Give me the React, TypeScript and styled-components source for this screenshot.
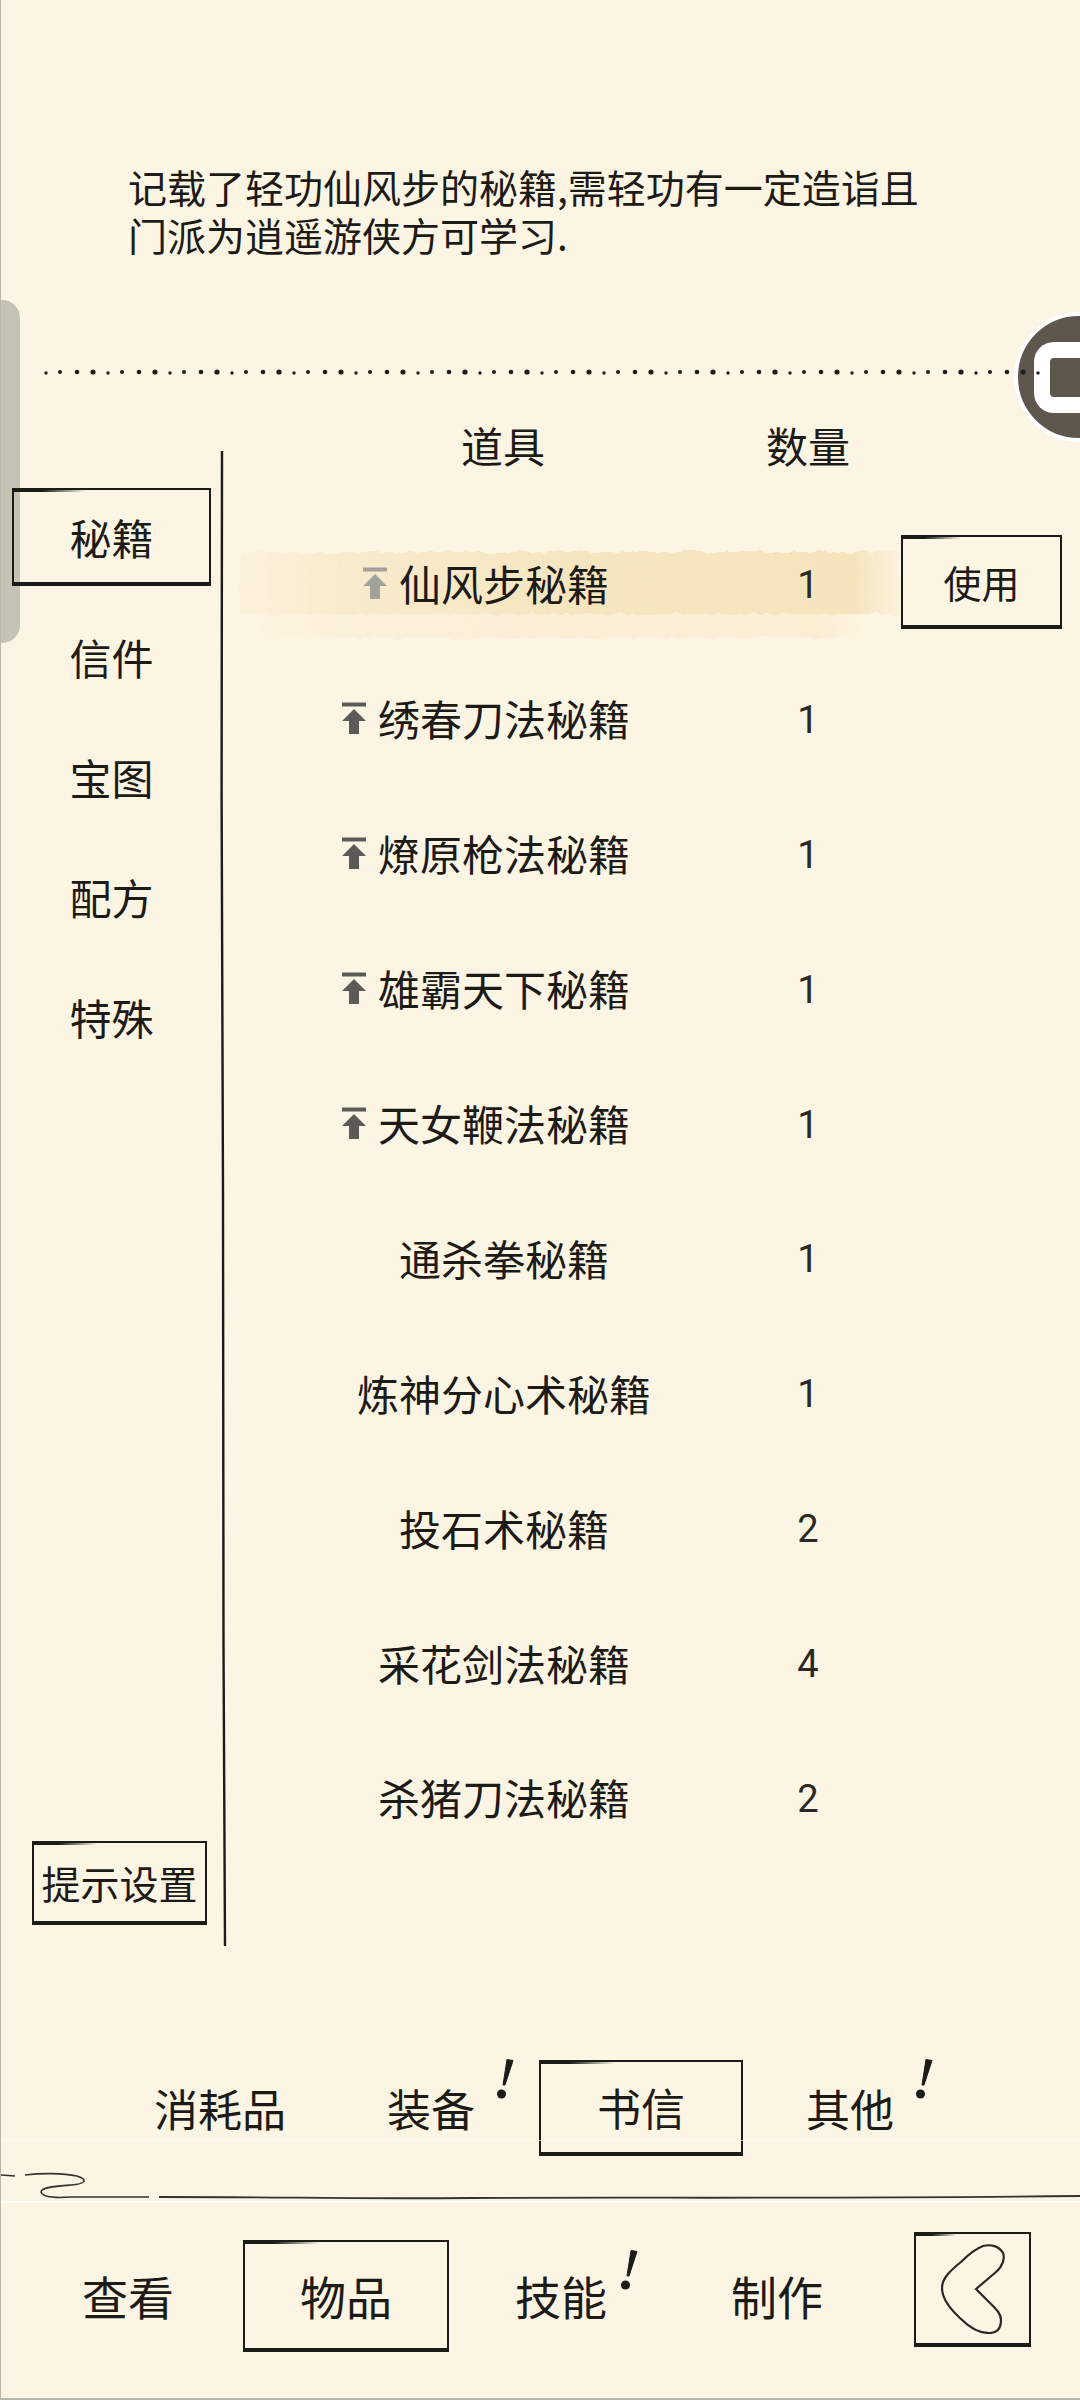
import React from "react";
import styled, { createGlobalStyle } from "styled-components";

const INK = "#1c1b18";
const PAPER = "#fdf5e3";
const FONT = `"Noto Sans CJK SC", "Noto Sans", sans-serif`;

const Global = createGlobalStyle`
  html, body { margin: 0; padding: 0; background: ${PAPER}; }
  * { box-sizing: border-box; }
`;

const Page = styled.div`
  position: relative;
  width: 1080px;
  height: 2400px;
  overflow: hidden;
  display: flex;
  flex-direction: column;
  background: ${PAPER};
  color: ${INK};
  font-family: ${FONT};
  font-weight: 400;
  border-left: 1px solid #b9b7a9;
  border-bottom: 2px solid #b9b7a9;
`;

const Intro = styled.p`
  margin: 0;
  height: 360px;
  padding: 162px 120px 0 127px;
  font-size: 39px;
  line-height: 48px;
`;

const Dots = styled.svg`
  position: relative;
  z-index: 1;
  display: block;
  flex: none;
`;

const Handle = styled.div`
  position: absolute;
  left: 0;
  top: 300px;
  width: 19px;
  height: 343px;
  background: #c5c3b3;
  border-radius: 0 18px 18px 0;
`;

const Bubble = styled.div`
  position: absolute;
  left: 1013px;
  top: 312px;
  width: 130px;
  height: 130px;
  border-radius: 50%;
  background: #5f564e;
  border: 4px solid #fff;
  overflow: hidden;
`;

const BubbleMark = styled.div`
  position: absolute;
  left: 16px;
  top: 26px;
  width: 80px;
  height: 71px;
  border: 16px solid #fff;
  border-right: 0;
  border-radius: 20px 0 0 20px;
`;

const Main = styled.div`
  display: flex;
  height: 1552px;
  margin-top: 10px;
`;

const Side = styled.nav`
  position: relative;
  flex: none;
  width: 226px;
  display: flex;
  flex-direction: column;
  padding: 94px 0 21px 11px;
`;

const SideLine = styled.svg`
  position: absolute;
  right: 0;
  top: 0;
`;

const Sketch = styled.div<{ $w: number; $h: number; $size: number }>`
  position: relative;
  flex: none;
  width: ${(p) => p.$w}px;
  height: ${(p) => p.$h}px;
  display: flex;
  align-items: center;
  justify-content: center;
  font-size: ${(p) => p.$size}px;
  border: 2px solid ${INK};
  border-bottom-width: 4px;

  &::before {
    content: "";
    position: absolute;
    left: -2px;
    top: -2px;
    width: 38%;
    height: 4px;
    background: linear-gradient(90deg, ${INK} 40%, rgba(28, 27, 24, 0));
  }
`;

const SideTab = styled.div`
  flex: none;
  width: 199px;
  height: 120px;
  display: flex;
  align-items: center;
  justify-content: center;
  font-size: 42px;
`;

const SideTabs = styled.div`
  display: flex;
  flex-direction: column;
  flex: 1;

  & > ${Sketch} {
    margin-bottom: 10px;
  }
`;

const Tip = styled(Sketch)`
  margin-left: 20px;
`;

const Content = styled.section`
  flex: 1;
  display: flex;
  flex-direction: column;
  padding-top: 17px;
`;

const HeadRow = styled.div`
  flex: none;
  height: 66px;
  display: flex;
  align-items: center;
  font-size: 42px;
  margin-bottom: 40px;
`;

const Row = styled.div`
  position: relative;
  flex: none;
  height: 134.9px;
  display: flex;
  align-items: center;
  font-size: 42px;
`;

const NameCell = styled.div`
  flex: none;
  width: 554px;
  padding-bottom: 3px;
  display: flex;
  justify-content: center;
`;

const HeadName = styled(NameCell)`
  padding-right: 2px;
  padding-bottom: 0;
`;

const QtyCell = styled.div`
  flex: none;
  width: 28px;
  margin-left: 13px;
  display: flex;
  justify-content: center;
  white-space: nowrap;
`;

const Qty = styled(QtyCell)`
  font-family: "Roboto", sans-serif;
  font-size: 38px;
  font-weight: 400;
  color: #2a2926;
  padding-top: 1px;
`;

const Name = styled.span`
  position: relative;
  white-space: nowrap;
`;

const UpIcon = styled.svg<{ $dim: boolean }>`
  position: absolute;
  right: 100%;
  top: 14px;
  margin-right: 12px;
  color: ${(p) => (p.$dim ? "#a3a19b" : "#5b5a57")};
`;

const Brush = styled.svg`
  position: absolute;
  left: 9px;
  top: 30px;
  pointer-events: none;
`;

const RowBody = styled.div`
  position: relative;
  display: flex;
  align-items: center;
`;

const Use = styled(Sketch)`
  position: absolute;
  left: 674px;
  top: 18px;
`;

const SubTabs = styled.div`
  position: relative;
  height: 96px;
  margin-top: 114px;
  flex: none;
`;

const Bar = styled.div`
  position: relative;
  flex: none;
  height: 172px;
`;

const Label = styled.span<{ $x: number; $size: number }>`
  position: absolute;
  left: ${(p) => p.$x}px;
  top: 50%;
  transform: translateY(-50%);
  font-size: ${(p) => p.$size}px;
  white-space: nowrap;
`;

const Bang = styled.svg<{ $x: number; $y: number }>`
  position: absolute;
  left: ${(p) => p.$x}px;
  top: ${(p) => p.$y}px;
`;

const Floating = styled(Sketch)<{ $x: number; $y: number }>`
  position: absolute;
  left: ${(p) => p.$x}px;
  top: ${(p) => p.$y}px;
`;

const Seam = styled.div<{ $y: number; $o: number; $t: number }>`
  position: absolute;
  left: 0;
  right: 0;
  top: ${(p) => p.$y}px;
  height: ${(p) => p.$t}px;
  background: rgba(255, 255, 255, ${(p) => p.$o});
`;

const DividerArt = styled.svg`
  display: block;
  flex: none;
  margin-top: 13px;
`;

const items = [
  { name: "仙风步秘籍", qty: 1, up: "dim" },
  { name: "绣春刀法秘籍", qty: 1, up: "on" },
  { name: "燎原枪法秘籍", qty: 1, up: "on" },
  { name: "雄霸天下秘籍", qty: 1, up: "on" },
  { name: "天女鞭法秘籍", qty: 1, up: "on" },
  { name: "通杀拳秘籍", qty: 1 },
  { name: "炼神分心术秘籍", qty: 1 },
  { name: "投石术秘籍", qty: 2 },
  { name: "采花剑法秘籍", qty: 4 },
  { name: "杀猪刀法秘籍", qty: 2 },
];

const sideTabs = ["信件", "宝图", "配方", "特殊"];

// hand spaced dots for the divider
const dotXs: number[] = [];
for (let x = 45, i = 0; x < 1040; i++) {
  dotXs.push(x);
  x += 14 + ((i * 7) % 4);
}

const BangMark = ({ x, y }: { x: number; y: number }) => (
  <Bang $x={x} $y={y} width="20" height="44" viewBox="0 0 20 44">
    <path d="M11 1.5 L17 2.5 L9 27 L7 27 Z" fill={INK} stroke={INK} strokeLinejoin="round" />
    <circle cx="5.5" cy="36" r="4.5" fill={INK} />
  </Bang>
);

export default function App() {
  return (
    <Page>
      <Global />
      <Handle />
      <Intro>
        记载了轻功仙风步的秘籍,需轻功有一定造诣且
        <br />
        门派为逍遥游侠方可学习.
      </Intro>
      <Dots width="1080" height="24" viewBox="0 0 1080 24">
        {dotXs.map((x, i) => (
          <circle key={x} cx={x} cy={12 + (i % 4 === 0 ? 1 : 0)} r={1.7 + ((i * 5) % 4) * 0.3} fill="#1f1e1b" />
        ))}
      </Dots>
      <Bubble>
        <BubbleMark />
      </Bubble>
      <Main>
        <Side>
          <SideLine width="8" height="1552" viewBox="0 0 8 1552">
            <path d="M3 57 L2.6 400 L4 800 L4.5 1250 L6 1552" fill="none" stroke={INK} strokeWidth="2.4" />
          </SideLine>
          <SideTabs>
            <Sketch $w={199} $h={98} $size={42}>
              秘籍
            </Sketch>
            {sideTabs.map((t) => (
              <SideTab key={t}>{t}</SideTab>
            ))}
          </SideTabs>
          <Tip $w={175} $h={84} $size={39}>
            提示设置
          </Tip>
        </Side>
        <Content>
          <HeadRow>
            <HeadName>道具</HeadName>
            <QtyCell>数量</QtyCell>
          </HeadRow>
          {items.map((it, i) => (
            <Row key={it.name}>
              {i === 0 && (
                <Brush width="670" height="96" viewBox="0 0 670 96">
                  <defs>
                    <linearGradient id="band" x1="0" x2="1" y1="0" y2="0">
                      <stop offset="0" stopColor="#f7e8c6" stopOpacity="0.25" />
                      <stop offset="0.16" stopColor="#f7e8c6" stopOpacity="0.8" />
                      <stop offset="0.5" stopColor="#f6e6c0" />
                      <stop offset="0.93" stopColor="#f5e4bc" />
                      <stop offset="1" stopColor="#f6e6c2" stopOpacity="0.2" />
                    </linearGradient>
                    <filter id="rough" x="-2%" y="-10%" width="104%" height="120%">
                      <feTurbulence type="fractalNoise" baseFrequency="0.09" numOctaves="2" seed="4" />
                      <feDisplacementMap in="SourceGraphic" scale="7" />
                    </filter>
                  </defs>
                  <g filter="url(#rough)">
                    <rect x="4" y="5" width="660" height="62" fill="url(#band)" />
                    <rect x="24" y="67" width="600" height="24" fill="url(#band)" opacity="0.4" />
                  </g>
                </Brush>
              )}
              <RowBody>
                <NameCell>
                  <Name>
                    {it.up && (
                      <UpIcon $dim={it.up === "dim"} width="24" height="34" viewBox="0 0 24 34">
                        <path d="M0 1.5h24v4H0z" fill="currentColor" />
                        <path d="M12 8 L24 20 H17 V33 H7 V20 H0 Z" fill="currentColor" />
                      </UpIcon>
                    )}
                    {it.name}
                  </Name>
                </NameCell>
                <Qty>{it.qty}</Qty>
              </RowBody>
              {i === 0 && (
                <Use $w={161} $h={94} $size={38}>
                  使用
                </Use>
              )}
            </Row>
          ))}
        </Content>
      </Main>
      <SubTabs>
        <Label $x={153} $size={44}>消耗品</Label>
        <Label $x={386} $size={44}>装备</Label>
        <BangMark x={495} y={-2} />
        <Floating $x={538} $y={0} $w={204} $h={96} $size={44}>
          书信
        </Floating>
        <Label $x={805} $size={44}>其他</Label>
        <BangMark x={914} y={-2} />
        <Seam $y={80} $o={0.6} $t={1} />
      </SubTabs>
      <DividerArt width="1080" height="40" viewBox="0 0 1080 40">
        <path d="M0 6 L14 7 M24 6 C40 4 62 4 76 7 C88 11 84 15 70 16 C56 17 40 18 40 23 C42 29 56 29 70 28 L148 28" fill="none" stroke="#35332e" strokeWidth="1.6" />
        <path d="M158 28 C300 28 330 30 470 29 C640 28 820 30 1080 27" fill="none" stroke="#35332e" strokeWidth="1.8" />
        <rect x="0" y="32" width="1080" height="2" fill="#fff" opacity="0.8" />
      </DividerArt>
      <Bar>
        <Label $x={81} $size={46}>查看</Label>
        <Floating $x={242} $y={31} $w={206} $h={112} $size={46}>
          物品
        </Floating>
        <Label $x={514} $size={46}>技能</Label>
        <BangMark x={619} y={40} />
        <Label $x={730} $size={46}>制作</Label>
        <Floating $x={913} $y={23} $w={117} $h={115} $size={46}>
          <svg width="64" height="90" viewBox="0 0 64 90">
            <path
              d="M35 45 L55 28 C62 22 64 14 62 9 C58 2 50 0 42 2 C34 5 26 12 20 18 C10 26 1 34 1 44 C1 54 10 66 20 75 C28 83 38 89 48 89 C56 89 60 84 60 76 C60 70 56 66 50 60 Z"
              fill="none"
              stroke="#2a2926"
              strokeWidth="2.2"
            />
          </svg>
        </Floating>
      </Bar>
    </Page>
  );
}
